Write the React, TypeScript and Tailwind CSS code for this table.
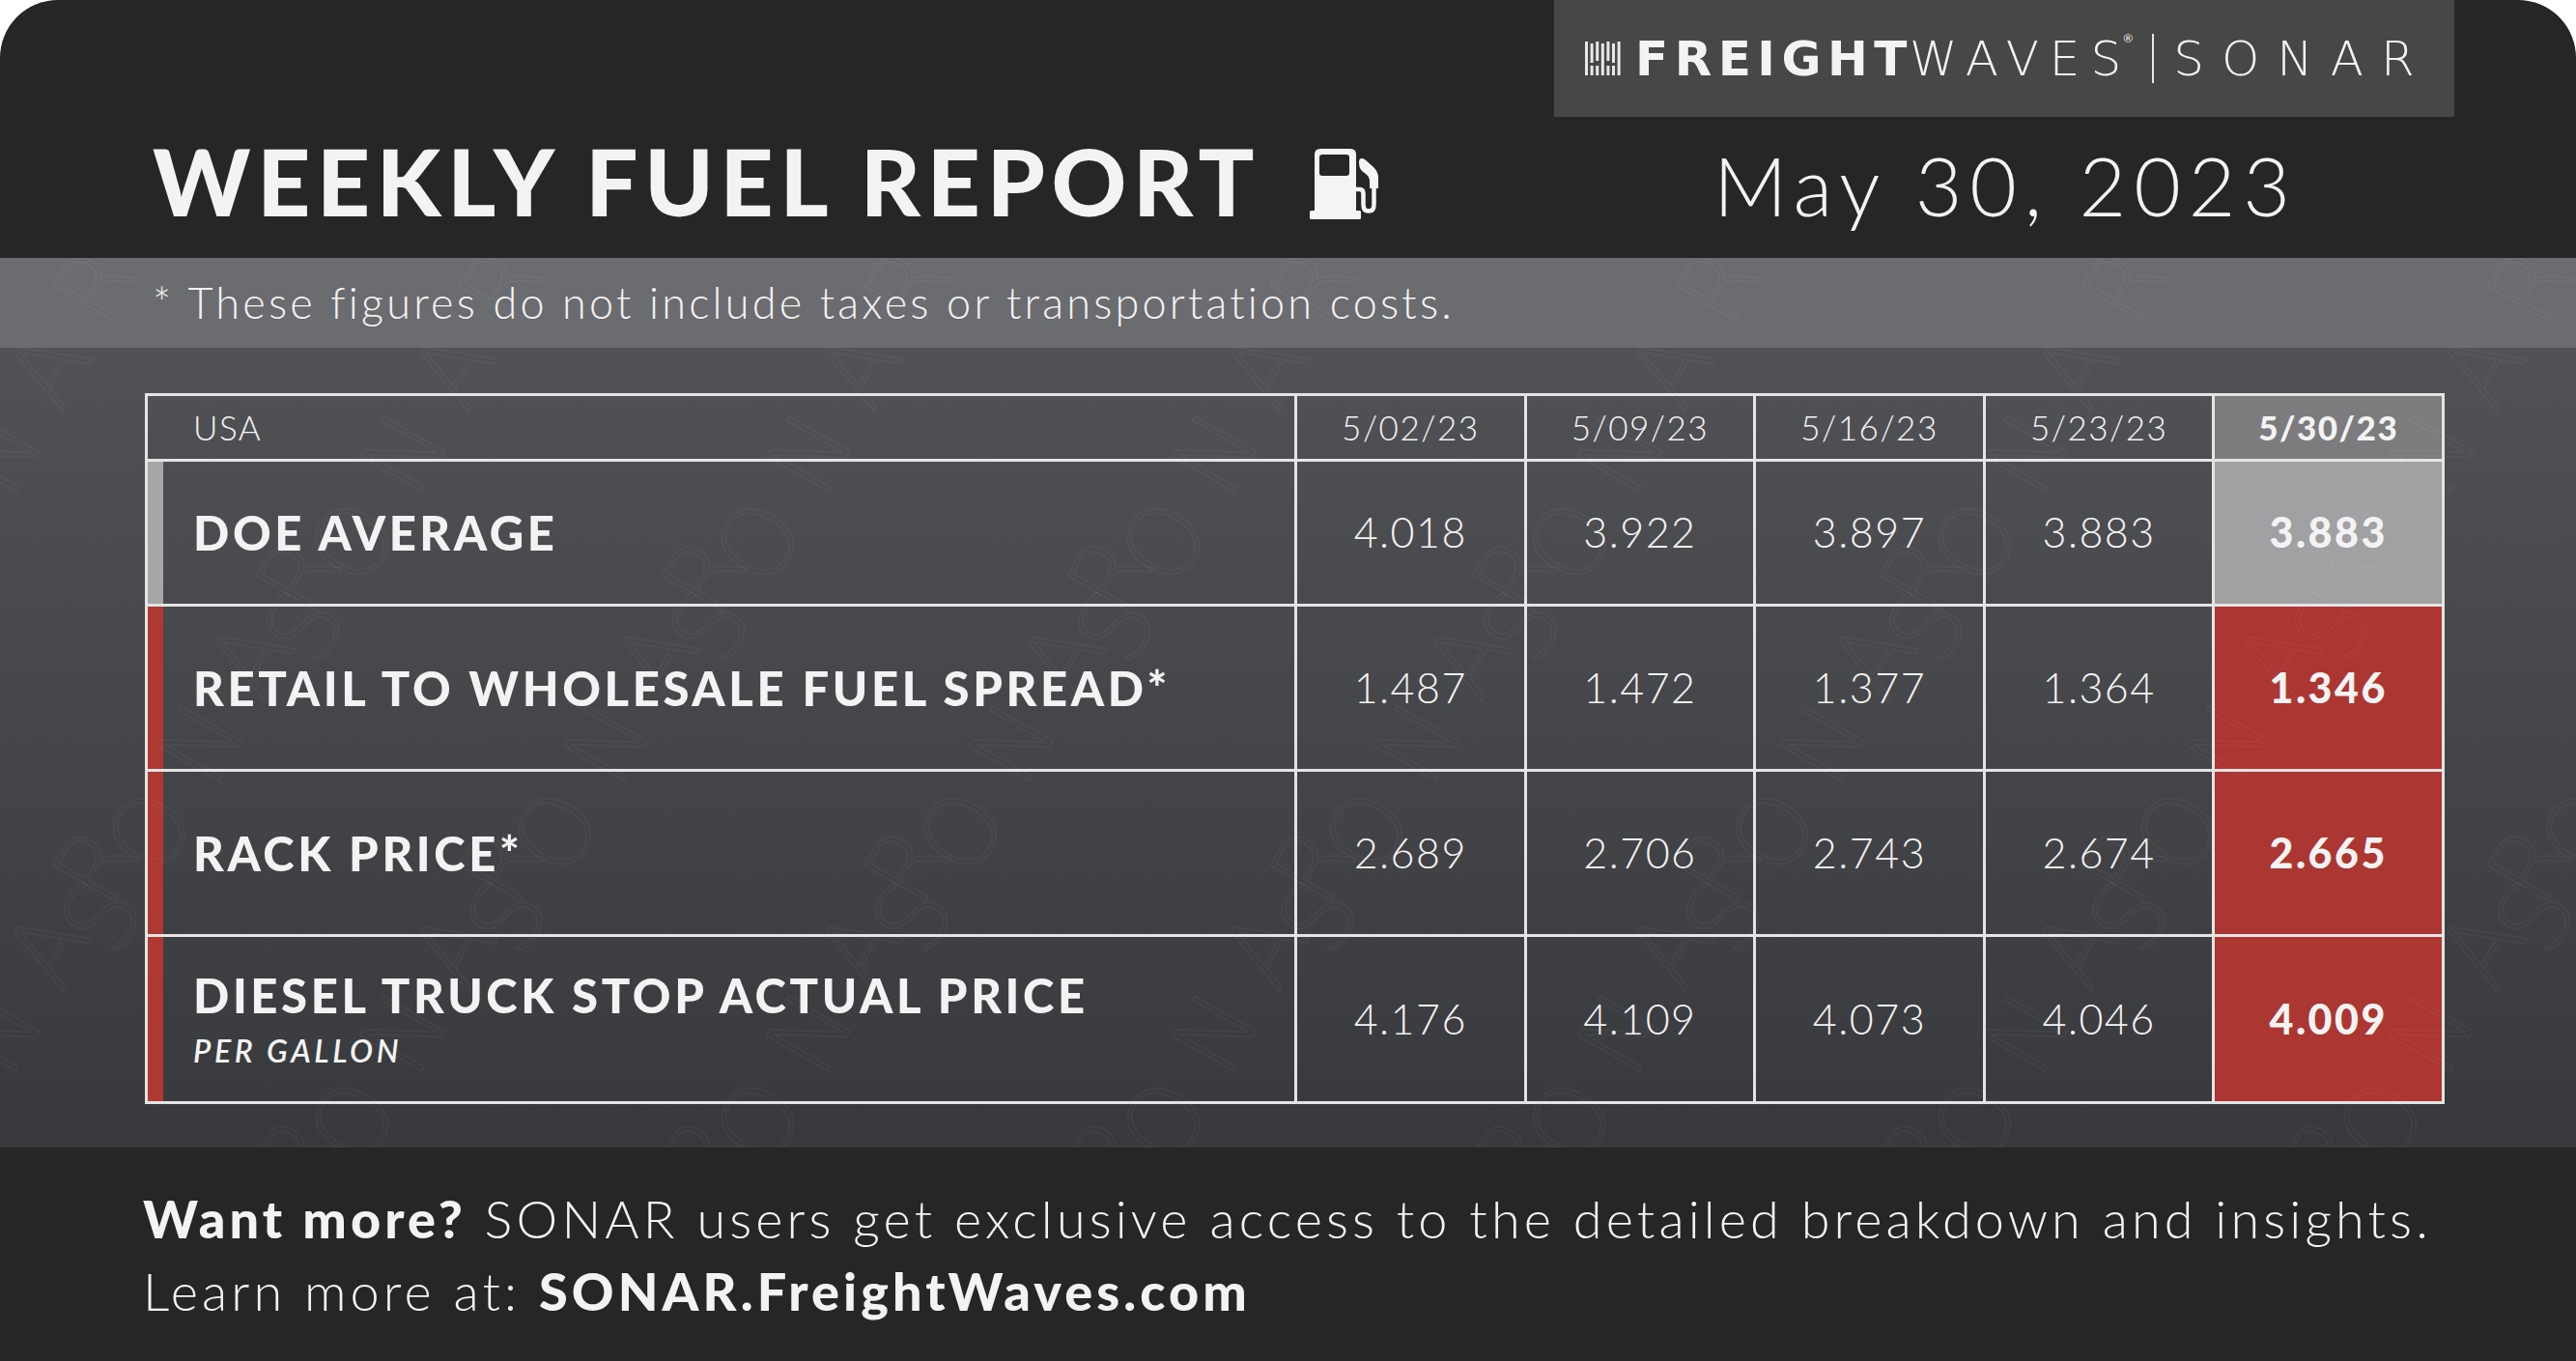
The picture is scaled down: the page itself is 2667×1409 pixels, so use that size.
import React from 'react'

interface Row {
  label: string
  sub?: string
  accent: 'gray' | 'red'
  values: string[]
  latest: string
  height: string
}

const dates = ['5/02/23', '5/09/23', '5/16/23', '5/23/23']

const rows: Row[] = [
  { label: 'DOE AVERAGE', accent: 'gray', values: ['4.018', '3.922', '3.897', '3.883'], latest: '3.883', height: 'h-[150px]' },
  { label: 'RETAIL TO WHOLESALE FUEL SPREAD*', accent: 'red', values: ['1.487', '1.472', '1.377', '1.364'], latest: '1.346', height: 'h-[171px]' },
  { label: 'RACK PRICE*', accent: 'red', values: ['2.689', '2.706', '2.743', '2.674'], latest: '2.665', height: 'h-[171px]' },
  { label: 'DIESEL TRUCK STOP ACTUAL PRICE', sub: 'PER GALLON', accent: 'red', values: ['4.176', '4.109', '4.073', '4.046'], latest: '4.009', height: 'h-[173px]' },
]

// faint diagonal SONAR marks behind the table
const marks: { x: number; y: number }[] = []
for (let r = 0; r < 4; r++) {
  for (let c = 0; c < 7; c++) {
    marks.push({ x: c * 420 + (r % 2) * 210 - 120, y: r * 300 - 60 })
  }
}

function BarsMark() {
  return (
    <svg width="40" height="35" viewBox="0 0 40 35" className="shrink-0">
      {[0, 1, 2, 3, 4, 5, 6].map((i) => (
        <g key={i} fill="#e8e8e8">
          <rect x={i * 5.6} y={i % 2 ? 2 : 0} width="3" height={i % 3 === 0 ? 35 : 20} />
          <rect x={i * 5.6} y={i % 3 === 0 ? 35 : 25} width="3" height={i % 3 === 0 ? 0 : 10} />
        </g>
      ))}
    </svg>
  )
}

function PumpIcon() {
  return (
    <svg width="74" height="74" viewBox="0 0 74 74" className="shrink-0 translate-y-[3px]">
      <path d="M6 7 Q6 1 12 1 H43 Q49 1 49 7 V67 H6 Z" fill="#f4f4f4" />
      <rect x="1" y="65" width="53" height="9" rx="1.5" fill="#f4f4f4" />
      <rect x="11" y="7" width="31" height="22" rx="3" fill="#262626" />
      <path d="M49 43 H53 Q56.5 43 56.5 48 V59 Q56.5 65.5 62 65.5 Q67.5 65.5 67.5 59 V40" stroke="#f4f4f4" strokeWidth="4.5" fill="none" />
      <path d="M52 15 Q52 9 58 12 L67 20 Q72 25 72 31 V42 H63 V35 Q63 30 59 27 L55 24 Q52 21 52 15 Z" fill="#f4f4f4" />
    </svg>
  )
}

export default function App() {
  return (
    <div className="w-[2667px] h-[1409px] bg-white font-['Lato','Open_Sans',sans-serif] text-[#f3f3f3]">
      <div className="w-full h-full rounded-t-[60px] overflow-hidden bg-[#262626] flex flex-col">
        {/* Header */}
        <div className="h-[267px] shrink-0 flex flex-col">
          <div className="flex justify-end pr-[126px]">
            <div className="w-[932px] h-[121px] bg-[#474747] flex items-center px-[32px]">
              <BarsMark />
              <span className="ml-[12px] shrink-0 font-['DejaVu_Sans',sans-serif] font-bold text-[50px] leading-none tracking-[6.5px]">FREIGHT</span>
              <span className="-ml-[4px] shrink-0 font-['DejaVu_Sans',sans-serif] font-extralight text-[50px] leading-none">
                <span className="tracking-[11px]">WAVE</span>S
              </span>
              <span className="self-start mt-[34px] ml-[2px] shrink-0 text-[12px] leading-none">®</span>
              <div className="w-[2px] h-[51px] shrink-0 bg-[#e8e8e8] ml-[20px] mr-[20px]" />
              <span className="shrink-0 font-['DejaVu_Sans',sans-serif] font-extralight text-[50px] leading-none">
                <span className="tracking-[18px]">SONA</span>R
              </span>
            </div>
          </div>
          <div className="flex items-baseline pl-[158px] mt-[18px]">
            <div className="w-[1620px] flex items-baseline">
              <h1 className="text-[96px] leading-none font-black tracking-[6.7px]">WEEKLY FUEL REPORT</h1>
              <div className="ml-[50px]">
                <PumpIcon />
              </div>
            </div>
            <div className="-ml-[4px] text-[84px] leading-none font-light tracking-[7.8px]">May 30, 2023</div>
          </div>
        </div>

        {/* Note + body with watermark */}
        <div className="relative flex-1 flex flex-col">
          <div className="h-[93px] shrink-0 bg-[#6b6c70] flex items-center pl-[158px]">
            <p className="text-[45px] leading-none font-light tracking-[3.2px]">* These figures do not include taxes or transportation costs.</p>
          </div>
          <div className="flex-1 bg-gradient-to-b from-[#515256] to-[#38393c] pt-[47px] pl-[150px]">
            <div className="w-[2381px] border-t-[3px] border-l-[3px] border-[#e4e4e4] grid grid-cols-[1190px_repeat(5,1fr)]">
              <div className="h-[68px] border-r-[3px] border-b-[3px] border-[#e4e4e4] flex items-center pl-[47px] text-[35px] font-light tracking-[1.5px]">USA</div>
              {dates.map((d) => (
                <div key={d} className="h-[68px] border-r-[3px] border-b-[3px] border-[#e4e4e4] flex items-center justify-center text-[35px] font-light tracking-[1.5px]">{d}</div>
              ))}
              <div className="h-[68px] border-r-[3px] border-b-[3px] border-[#e4e4e4] bg-[#7c7c7e] flex items-center justify-center text-[35px] font-black tracking-[1.5px]">5/30/23</div>

              {rows.map((row) => (
                <React.Fragment key={row.label}>
                  <div className={`${row.height} border-r-[3px] border-b-[3px] border-[#e4e4e4] flex`}>
                    <div className={`w-[16px] shrink-0 ${row.accent === 'gray' ? 'bg-[#a7a7a8]' : 'bg-[#ae3832]'}`} />
                    <div className="flex flex-col justify-center pl-[31px]">
                      <div className="text-[49px] leading-none font-black tracking-[3.6px]">{row.label}</div>
                      {row.sub && <div className="mt-[17px] text-[32px] leading-none italic font-semibold tracking-[3.6px]">{row.sub}</div>}
                    </div>
                  </div>
                  {row.values.map((v, i) => (
                    <div key={i} className={`${row.height} border-r-[3px] border-b-[3px] border-[#e4e4e4] flex items-center justify-center text-[43px] font-light tracking-[1.5px]`}>{v}</div>
                  ))}
                  <div
                    className={`${row.height} border-r-[3px] border-b-[3px] border-[#e4e4e4] flex items-center justify-center text-[43px] font-black tracking-[2.5px] ${row.accent === 'gray' ? 'bg-[#a1a1a3]' : 'bg-[#ab3632]'}`}
                  >
                    {row.latest}
                  </div>
                </React.Fragment>
              ))}
            </div>
          </div>

          <div aria-hidden="true" className="absolute inset-0 overflow-hidden pointer-events-none">
            {marks.map((m, i) => (
              <span
                key={i}
                className="absolute font-['DejaVu_Sans',sans-serif] font-extralight text-[100px] leading-none tracking-[30px] text-transparent [-webkit-text-stroke:2px_rgba(255,255,255,0.035)] -rotate-[60deg] origin-left before:content-['SONAR']"
                style={{ left: m.x, top: m.y + 420 }}
              />
            ))}
          </div>
        </div>

        {/* Footer */}
        <div className="h-[221px] shrink-0 pl-[148px] pt-[36px] text-[54px] leading-[75px] font-light tracking-[4.1px]">
          <p>
            <span className="font-black">Want more?</span> SONAR users get exclusive access to the detailed breakdown and insights.
          </p>
          <p>
            Learn more at: <span className="font-black">SONAR.FreightWaves.com</span>
          </p>
        </div>
      </div>
    </div>
  )
}
